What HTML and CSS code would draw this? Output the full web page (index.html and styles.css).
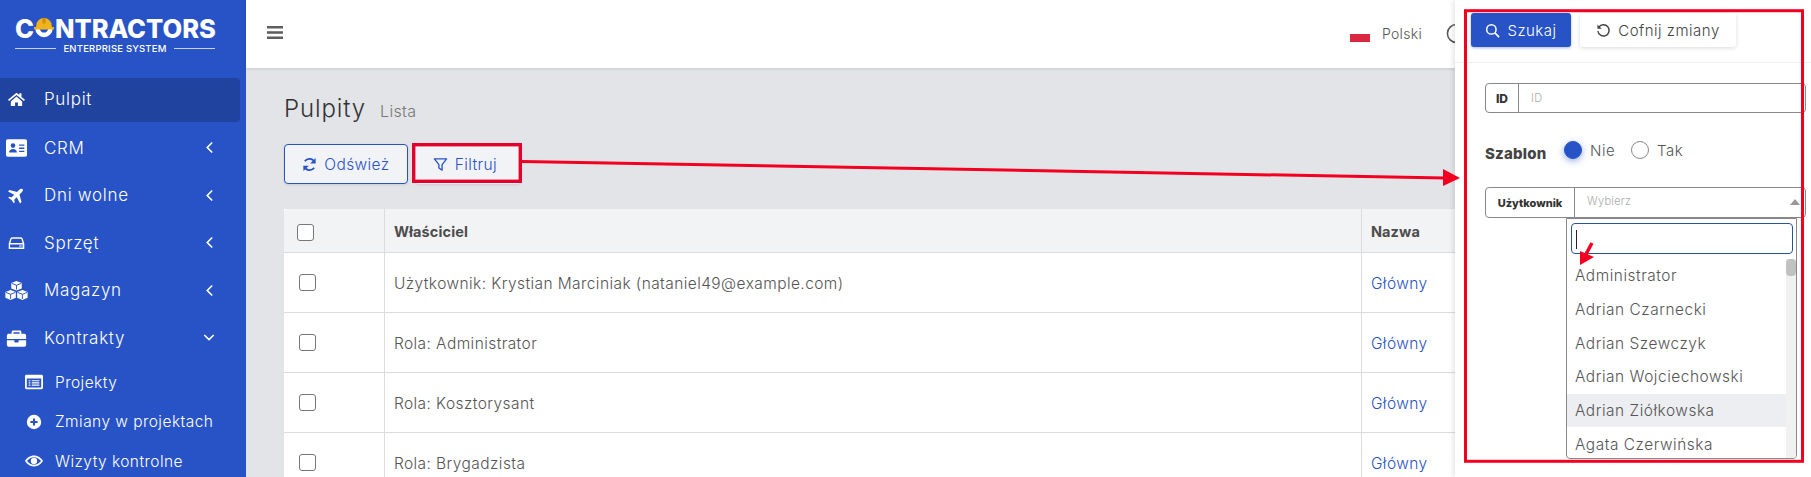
FILE: index.html
```html
<!DOCTYPE html>
<html lang="pl">
<head>
<meta charset="utf-8">
<title>Pulpity</title>
<link rel="stylesheet" href="styles.css">
</head>
<body>
<div class="shell">
  <aside class="sidebar">
    <div class="logo">
      <div class="logo-name">C<svg class="logo-o" viewBox="0 0 24 23"><path d="M2.500 12a9.500 9.500 0 0 0 19 0h-5a4.500 4.500 0 0 1-9 0z" fill="#fff"/><path d="M3.500 9a8.500 8.500 0 0 1 17 0v2h-17z" fill="#f2b21c"/><rect x="1" y="10.500" width="22" height="2.500" rx="1" fill="#f2b21c"/><rect x="10.300" y=".5" width="3.400" height="6" fill="#c98f10"/></svg>NTRACTORS</div>
      <div class="logo-sub"><span>ENTERPRISE SYSTEM</span></div>
    </div>
    <nav class="menu">
      <a class="item active"><svg class="ico ico-home" viewBox="0 0 24 20"><path d="M12 1 0 11l1.500 1.800L12 4.200l10.500 8.600L24 11l-5-4V2h-3v2.500zM4 13.500V20h6v-5h4v5h6v-6.500L12 6.500z" fill="#fff"/></svg><span>Pulpit</span></a>
      <a class="item"><svg class="ico" viewBox="0 0 24 20"><path fill-rule="evenodd" d="M2 0h20a2 2 0 0 1 2 2v16a2 2 0 0 1-2 2H2a2 2 0 0 1-2-2V2a2 2 0 0 1 2-2zm6 4.500a2.700 2.700 0 1 0 0 5.400 2.700 2.700 0 0 0 0-5.400zM3.500 15h9c0-2.500-2-4-4.500-4s-4.500 1.500-4.500 4zM15 6v1.500h6V6zm0 3.500V11h6V9.500zm0 3.500v1.500h6V13z" fill="#fff"/></svg><span>CRM</span><svg class="chev" viewBox="0 0 10 14"><path d="M8 1.500 2.500 7 8 12.500" fill="none" stroke="#fff" stroke-width="1.800"/></svg></a>
      <a class="item"><svg class="ico ico-plane" viewBox="0 0 24 24"><path transform="rotate(45 12 12)" d="M12 0c1.500 0 2.500 2 2.500 4v4.500L24 14v3l-9.500-3v5l3 2v2l-5.500-1-5.500 1v-2l3-2v-5L0 17v-3l9.500-5.500V4C9.500 2 10.500 0 12 0z" fill="#fff"/></svg><span>Dni wolne</span><svg class="chev" viewBox="0 0 10 14"><path d="M8 1.500 2.500 7 8 12.500" fill="none" stroke="#fff" stroke-width="1.800"/></svg></a>
      <a class="item"><svg class="ico ico-hdd" viewBox="0 0 24 20"><path d="M4 4.500 2 11v6.500h20V11l-2-6.500a2 2 0 0 0-2-1.500H6a2 2 0 0 0-2 1.500zM2.500 11h19" fill="none" stroke="#fff" stroke-width="2"/><rect x="16" y="13.300" width="2" height="2" fill="#fff"/><rect x="19" y="13.300" width="1.500" height="2" fill="#fff"/></svg><span>Sprzęt</span><svg class="chev" viewBox="0 0 10 14"><path d="M8 1.500 2.500 7 8 12.500" fill="none" stroke="#fff" stroke-width="1.800"/></svg></a>
      <a class="item"><svg class="ico ico-cubes" viewBox="0 0 24 20"><path fill="#fff" d="M12 0l5.500 2v6L12 10 6.500 8V2zM5.800 9.500l5.500 2v6l-5.500 2.500L.3 17.500v-6zM18.200 9.500l5.500 2v6L18.200 20l-5.500-2.500v-6z"/><path d="M7 2.500l5 2 5-2M.8 12l5 2 5-2M13.200 12l5 2 5-2M12 4.500V9M5.800 14v5M18.200 14v5" fill="none" stroke="#2753c6" stroke-width="1"/></svg><span>Magazyn</span><svg class="chev" viewBox="0 0 10 14"><path d="M8 1.500 2.500 7 8 12.500" fill="none" stroke="#fff" stroke-width="1.800"/></svg></a>
      <a class="item"><svg class="ico" viewBox="0 0 24 20"><path fill="#fff" d="M8 1.500h8A1.500 1.500 0 0 1 17.500 3v2H21a2 2 0 0 1 2 2v4H1V7a2 2 0 0 1 2-2h3.500V3A1.500 1.500 0 0 1 8 1.500zM8.500 3.500V5h7V3.500zM1 12.500h8.500V14a1 1 0 0 0 1 1h3a1 1 0 0 0 1-1v-1.500H23V18a2 2 0 0 1-2 2H3a2 2 0 0 1-2-2z"/></svg><span>Kontrakty</span><svg class="chev chev-down" viewBox="0 0 14 10"><path d="M1.500 2 7 7.500 12.500 2" fill="none" stroke="#fff" stroke-width="1.800"/></svg></a>
      <a class="sub"><svg class="sico" viewBox="0 0 20 16"><path fill-rule="evenodd" fill="#fff" d="M1.500 0h17A1.500 1.500 0 0 1 20 1.500v13a1.500 1.500 0 0 1-1.500 1.500h-17A1.500 1.500 0 0 1 0 14.500v-13A1.500 1.500 0 0 1 1.500 0zM2 4v10h16V4zm2 2h2v1.300H4zm3.500 0h8.500v1.300H7.500zM4 8.400h2v1.300H4zm3.500 0h8.500v1.300H7.500zM4 10.800h2v1.300H4zm3.500 0h8.500v1.300H7.500z"/></svg><span>Projekty</span></a>
      <a class="sub"><svg class="sico" viewBox="0 0 20 20"><path fill-rule="evenodd" fill="#fff" d="M10 1a9 9 0 1 1 0 18 9 9 0 0 1 0-18zM8.700 5.500v3.200H5.500v2.600h3.200v3.200h2.600v-3.200h3.200V8.700h-3.200V5.500z"/></svg><span>Zmiany w projektach</span></a>
      <a class="sub"><svg class="sico" viewBox="0 0 20 16"><path fill-rule="evenodd" fill="#fff" d="M10 2c4.500 0 8 2.800 10 6-2 3.200-5.500 6-10 6S2 11.200 0 8c2-3.200 5.500-6 10-6zm0 1.700c-3 0-5.700 1.800-7.800 4.300 2.100 2.500 4.800 4.300 7.800 4.300s5.700-1.800 7.800-4.300C15.700 5.500 13 3.700 10 3.700zM10 4.500a3.500 3.500 0 1 1 0 7 3.500 3.500 0 0 1 0-7z"/></svg><span>Wizyty kontrolne</span></a>
    </nav>
  </aside>
  <div class="main">
    <header class="topbar">
      <svg class="burger" viewBox="0 0 16 13"><path d="M0 0h16v2.600H0zM0 5.200h16v2.600H0zM0 10.400h16V13H0z" fill="#5e5e5e"/></svg>
      <div class="top-right">
        <span class="flag"></span>
        <span class="lang">Polski</span>
        <svg class="clock" viewBox="0 0 22 22"><circle cx="11" cy="11" r="9.500" fill="none" stroke="#555" stroke-width="1.600"/><path d="M11 5v6l4 2" fill="none" stroke="#555" stroke-width="1.600"/></svg>
      </div>
    </header>
    <section class="content">
      <div class="heading"><h1>Pulpity</h1><small>Lista</small></div>
      <div class="actions">
        <button class="btn btn-outline"><svg class="bico" viewBox="0 0 16 16"><path d="M13.600 6.200A6 6 0 0 0 3 4.500M2.400 9.800A6 6 0 0 0 13 11.500" fill="none" stroke="#2753c6" stroke-width="1.900"/><path d="M14.500 1v5.800H8.700zM1.500 15V9.200h5.800z" fill="#2753c6"/></svg>Odśwież</button>
        <button class="btn btn-filter"><svg class="bico" viewBox="0 0 16 16"><path d="M1.500 2h13L9.700 8.200V14l-3.400-2.200V8.200z" fill="none" stroke="#2753c6" stroke-width="1.400" stroke-linejoin="round"/></svg>Filtruj</button>
      </div>
      <table class="grid">
        <thead>
          <tr><th class="c-check"><span class="box box-head"></span></th><th class="c-owner">Właściciel</th><th class="c-name">Nazwa</th></tr>
        </thead>
        <tbody>
          <tr><td class="c-check"><span class="box"></span></td><td>Użytkownik: Krystian Marciniak (nataniel49@example.com)</td><td><a class="link">Główny</a></td></tr>
          <tr><td class="c-check"><span class="box"></span></td><td>Rola: Administrator</td><td><a class="link">Główny</a></td></tr>
          <tr><td class="c-check"><span class="box"></span></td><td>Rola: Kosztorysant</td><td><a class="link">Główny</a></td></tr>
          <tr><td class="c-check"><span class="box"></span></td><td>Rola: Brygadzista</td><td><a class="link">Główny</a></td></tr>
        </tbody>
      </table>
    </section>
  </div>
  <aside class="panel">
    <div class="panel-head">
      <button class="pbtn pbtn-primary"><svg class="bico" viewBox="0 0 16 16"><circle cx="6.800" cy="6.800" r="5" fill="none" stroke="#fff" stroke-width="1.600"/><path d="M10.500 10.500 15 15" stroke="#fff" stroke-width="1.800"/></svg>Szukaj</button>
      <button class="pbtn pbtn-light"><svg class="bico" viewBox="0 0 16 16"><path d="M3 4.500A6 6 0 1 1 2 8.500" fill="none" stroke="#444" stroke-width="1.500"/><path d="M1.500 1.500v4.700h4.700z" fill="#444"/></svg>Cofnij zmiany</button>
    </div>
    <div class="panel-body">
      <div class="field field-id"><label class="addon addon-id">ID</label><span class="fake-input placeholder">ID</span></div>
      <div class="radios">
        <span class="radio-title">Szablon</span>
        <span class="radio radio-on"></span><span class="radio-text">Nie</span>
        <span class="radio"></span><span class="radio-text">Tak</span>
      </div>
      <div class="select-wrap">
        <div class="field field-user"><label class="addon addon-user">Użytkownik</label><span class="fake-input select-box placeholder">Wybierz<i class="caret"></i></span></div>
        <div class="dropdown">
          <div class="search"><i class="cursor"></i></div>
          <div class="list-wrap">
            <ul class="options">
              <li>Administrator</li>
              <li>Adrian Czarnecki</li>
              <li>Adrian Szewczyk</li>
              <li>Adrian Wojciechowski</li>
              <li class="hover">Adrian Ziółkowska</li>
              <li>Agata Czerwińska</li>
            </ul>
            <div class="scroll"><i class="thumb"></i></div>
          </div>
        </div>
      </div>
    </div>
  </aside>
  <svg class="annot" viewBox="0 0 1811 477">
    <rect x="413.700" y="144.700" width="106.600" height="36.600" fill="none" stroke="#e4002b" stroke-width="3.400"/>
    <rect x="1465.500" y="10.700" width="337" height="450.600" fill="none" stroke="#f30021" stroke-width="3"/>
    <path d="M522 161.500 1445 178" stroke="#f30021" stroke-width="3" fill="none"/>
    <path d="M1443 169 1460 178 1443 186z" fill="#f30021"/>
    <path d="M1592 243 1585 256" stroke="#f30021" stroke-width="3.500" fill="none"/>
    <path d="M1580 265 1580 251 1594 257z" fill="#f30021"/>
  </svg>
</div>
</body>
</html>
```

FILE: styles.css
```css
* { box-sizing: border-box; }
html, body { margin: 0; height: 100%; overflow: hidden; }
body { font-family: "Inter", "Noto Sans", sans-serif; color: #555; background: #e3e4e8; }
a { text-decoration: none; }
ul { list-style: none; margin: 0; padding: 0; }
.shell { position: relative; display: flex; width: 1811px; height: 477px; overflow: hidden; }

.sidebar { flex: 0 0 245px; background: #2753c6; color: #fff; }
.logo { height: 78px; padding: 16px 30px 0 15px; }
.logo-name { display: flex; align-items: center; height: 26px; font-size: 25.500px; font-weight: 800; line-height: 26px; white-space: nowrap; }
.logo-o { width: 22px; height: 22px; margin: -2px 0 0 -1px; flex: none; }
.logo-sub { display: flex; align-items: center; width: 200px; margin-top: 1px; font-size: 9.500px; font-weight: 500; letter-spacing: .2px; gap: 7px; }
.logo-sub::before, .logo-sub::after { content: ""; flex: 1; height: 1px; background: #c9d4f2; }
.menu { display: flex; flex-direction: column; }
.item { display: flex; align-items: center; height: 47.500px; padding: 0 0 2px 6px; width: 240px; color: #fff; font-size: 17px; font-weight: 300; letter-spacing: .7px; }
.item.active { height: 44px; margin-bottom: 3px; background: #2143a0; border-radius: 0 4px 4px 0; }
.ico { width: 21px; height: 18px; flex: none; margin-right: 17px; }
.ico-home { padding: 1px 2px; }
.ico-plane { padding: 0 2px; }
.ico-hdd { padding: 1px 2px; }
.ico-cubes { width: 23px; height: 19px; margin: 0 16px 0 -1px; }
.item span { flex: 1; }
.chev { width: 9px; height: 13px; flex: none; margin-right: 26px; }
.chev-down { width: 12px; height: 9px; margin-right: 25px; }
.sub { display: flex; align-items: center; height: 39.500px; padding-left: 25px; color: #fff; font-size: 15.500px; font-weight: 300; letter-spacing: .45px; white-space: nowrap; }
.sico { width: 18px; height: 16px; flex: none; margin-right: 12px; }

.main { flex: 1; min-width: 0; display: flex; flex-direction: column; }
.topbar { display: flex; align-items: center; justify-content: space-between; flex: 0 0 68px; padding: 0 0 0 21px; background: #fff; box-shadow: 0 1px 3px rgba(0,0,0,.12); }
.burger { width: 16px; height: 13px; margin-top: -3px; }
.top-right { display: flex; align-items: center; width: 461px; flex: none; margin-top: -1px; }
.flag { width: 20px; height: 16px; background: linear-gradient(#fff 50%, #dc2743 50%); flex: none; margin-right: 12px; }
.lang { font-size: 14px; font-weight: 300; color: #555; width: 64px; letter-spacing: .3px; }
.clock { width: 21px; height: 21px; flex: none; }
.content { flex: 1; padding: 24px 0 0 38px; }
.heading { display: flex; align-items: baseline; gap: 14px; height: 34px; }
h1 { margin: 0; font-size: 24px; font-weight: 300; color: #333; letter-spacing: .9px; line-height: 34px; }
small { font-size: 16px; font-weight: 300; color: #777; letter-spacing: .3px; }
.actions { display: flex; gap: 7px; margin-top: 18px; }
.btn { display: flex; align-items: center; justify-content: center; height: 40px; background: #f2f3f7; border-radius: 4px; color: #2753c6; font: 300 15.500px "Inter", sans-serif; letter-spacing: .4px; box-shadow: 0 1px 3px rgba(0,0,0,.1); }
.btn-outline { width: 124px; border: 1px solid #2753c6; }
.btn-filter { width: 106px; border: 0; padding: 0 6px 0 0; }
.bico { width: 15px; height: 15px; margin-right: 7px; flex: none; }
.grid { width: 1300px; margin-top: 25px; table-layout: fixed; border-collapse: separate; border-spacing: 0; background: #fff; }
.grid th { height: 44px; background: #f2f3f5; text-align: left; font-size: 14.500px; font-weight: 700; color: #4c4c4c; border-bottom: 1px solid #dcdcdc; padding: 2px 0 0 9px; letter-spacing: .1px; }
.grid td { height: 60px; font-size: 15.500px; font-weight: 300; color: #555; border-bottom: 1px solid #dcdcdc; padding: 2px 0 0 9px; letter-spacing: .42px; }
.grid tr > * + * { border-left: 1px solid #dcdcdc; }
.grid thead th:first-child { border-top-left-radius: 4px; }
.grid td.c-check { width: 100px; padding: 0 0 0 15px; }
.grid th.c-check { width: 100px; padding: 4px 0 0 13px; }
.grid .c-owner { width: 977px; }
.box { display: block; width: 17px; height: 17px; border: 1px solid #777; border-radius: 3px; background: #fff; }
.link { color: #2753c6; font-weight: 300; }

.panel { position: absolute; top: 0; right: 0; width: 356px; height: 477px; background: #fff; box-shadow: -2px 0 5px rgba(0,0,0,.1); }
.panel-head { display: flex; gap: 9px; height: 63px; padding: 13px 0 0 16px; border-bottom: 1px solid #eee; }
.pbtn { display: flex; align-items: center; justify-content: center; height: 34px; border: 0; border-radius: 3px; font: 300 15px "Inter", sans-serif; letter-spacing: .5px; }
.pbtn-primary { width: 100px; background: #2753c6; color: #fff; box-shadow: 0 1px 3px rgba(39,83,198,.4); }
.pbtn-light { width: 156px; background: #fff; color: #444; box-shadow: 0 1px 4px rgba(0,0,0,.15); }
.panel-body { padding: 20px 0 0 30px; }
.field { display: flex; width: 321px; }
.field-id { height: 30px; }
.addon { display: flex; align-items: center; justify-content: center; flex: none; border: 1px solid #888; border-radius: 4px 0 0 4px; font-size: 11px; font-weight: 800; color: #333; }
.addon-id { width: 34px; font-size: 12px; }
.addon-user { width: 90px; height: 31px; }
.fake-input { flex: 1; display: flex; align-items: center; margin-left: -1px; border: 1px solid #888; border-radius: 0 4px 4px 0; font-size: 11px; font-weight: 300; padding-left: 12px; }
.placeholder { color: #aaa; letter-spacing: .3px; }
.radios { display: flex; align-items: center; height: 18px; margin-top: 28px; }
.radio-title { width: 79px; margin-top: 7px; font-size: 15px; font-weight: 800; color: #444; letter-spacing: .2px; }
.radio { flex: none; width: 18px; height: 18px; border: 1px solid #888; border-radius: 50%; margin-right: 8px; }
.radio-on { background: #2753c6; border-color: #2753c6; box-shadow: 0 2px 7px rgba(39,83,198,.5); }
.radio-text { width: 41px; font-size: 15px; font-weight: 300; letter-spacing: .5px; color: #555; }
.radio-text + .radio + .radio-text { width: auto; }
.select-wrap { margin-top: 28px; position: relative; }
.field-user { height: 31px; }
.select-box { position: relative; margin-left: -1px; padding-bottom: 4px; }
.caret { position: absolute; right: 5px; top: 11px; border: 5px solid transparent; border-top: 0; border-bottom: 6px solid #999; }
.dropdown { position: absolute; left: 81px; top: 31px; width: 231px; height: 241px; padding: 4px 4px 0; background: #fff; border: 1px solid #888; border-radius: 0 0 4px 4px; overflow: hidden; }
.search { height: 31px; border: 1px solid #2753a0; border-radius: 4px; padding: 6px 4px; width: 222px; }
.cursor { display: block; width: 1px; height: 19px; background: #222; }
.list-wrap { display: flex; margin: 5px -4px 0; }
.options { flex: 1; }
.options li { height: 33.700px; display: flex; align-items: center; padding-left: 8px; font-size: 15.400px; font-weight: 300; letter-spacing: .55px; color: #555; }
.options li.hover { background: #eceef1; }
.scroll { flex: 0 0 10px; height: 200px; background: #f1f1f1; }
.thumb { display: block; height: 17px; background: #c1c1c1; border-radius: 4px; }
.annot { position: absolute; inset: 0; width: 1811px; height: 477px; pointer-events: none; }
```
